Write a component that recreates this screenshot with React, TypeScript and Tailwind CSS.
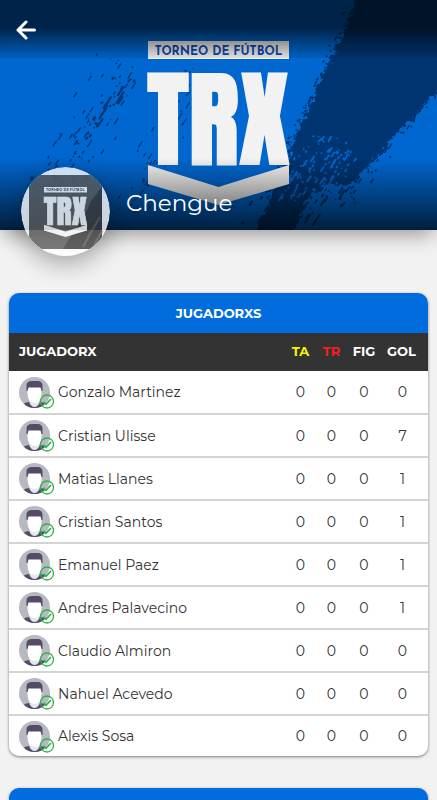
const players = [
  { name: "Gonzalo Martinez", ta: 0, tr: 0, fig: 0, gol: 0 },
  { name: "Cristian Ulisse", ta: 0, tr: 0, fig: 0, gol: 7 },
  { name: "Matias Llanes", ta: 0, tr: 0, fig: 0, gol: 1 },
  { name: "Cristian Santos", ta: 0, tr: 0, fig: 0, gol: 1 },
  { name: "Emanuel Paez", ta: 0, tr: 0, fig: 0, gol: 1 },
  { name: "Andres Palavecino", ta: 0, tr: 0, fig: 0, gol: 1 },
  { name: "Claudio Almiron", ta: 0, tr: 0, fig: 0, gol: 0 },
  { name: "Nahuel Acevedo", ta: 0, tr: 0, fig: 0, gol: 0 },
  { name: "Alexis Sosa", ta: 0, tr: 0, fig: 0, gol: 0 },
];

// Small seeded generator so the brush texture is the same on every render
function seeded(seed: number) {
  let s = seed;
  return () => {
    s = (s * 16807) % 2147483647;
    return s / 2147483647;
  };
}

// Dry brush marks scattered round the line x1,y1 -> x2,y2
function marks(seed: number, count: number, x1: number, y1: number, x2: number, y2: number, spread: number, maxLen: number) {
  const rnd = seeded(seed);
  let d = "";
  for (let i = 0; i < count; i++) {
    const t = rnd();
    const off = (rnd() + rnd() - 1) * spread;
    const x = x1 + (x2 - x1) * t + off;
    const y = y1 + (y2 - y1) * t + off * 0.3;
    const len = 1 + rnd() * rnd() * maxLen;
    d += `M${x.toFixed(1)} ${y.toFixed(1)}l${(-len * 0.55).toFixed(1)} ${(len * 0.83).toFixed(1)}`;
  }
  return d;
}

const leftMarks = marks(11, 110, 126, 62, 40, 215, 30, 9);
const leftBold = marks(29, 30, 130, 78, 74, 155, 7, 18);
const middleMarks = marks(47, 60, 200, 70, 130, 215, 22, 8);
const edgeMarks = marks(71, 160, 352, 10, 268, 200, 8, 4);
const rightMarks = marks(83, 110, 322, 175, 262, 228, 36, 16);
const rightEdge = marks(97, 50, 425, 98, 340, 205, 12, 7);
const blueMarks = marks(101, 120, 345, 140, 285, 200, 34, 9);

function Logo({ light, dark }: { light: string; dark: string }) {
  return (
    <g>
      <rect width="141" height="18" fill={light} />
      <text x="70.5" y="14" textAnchor="middle" fontSize="12" fontWeight="700" fontFamily="'Josefin Sans', Lato, sans-serif" fill={dark}>
        TORNEO DE FÚTBOL
      </text>
      <text x="70.5" y="123" textAnchor="middle" fontSize="105" fontFamily="Anton, 'Bebas Neue', Oswald, 'Roboto Condensed', sans-serif" fill={light} stroke={light} strokeWidth="2">
        TRX
      </text>
      <path d="M0 124L70.5 146L141 124V143L70.5 164L0 143Z" fill={light} />
    </g>
  );
}

function Banner() {
  return (
    <svg viewBox="0 0 437 230" preserveAspectRatio="xMidYMid slice" className="absolute inset-0 h-full w-full" aria-hidden="true">
      <defs>
        <filter id="rough" x="-5%" y="-5%" width="110%" height="110%">
          <feTurbulence type="fractalNoise" baseFrequency="0.18" numOctaves="3" seed="4" result="n" />
          <feDisplacementMap in="SourceGraphic" in2="n" scale="11" xChannelSelector="R" yChannelSelector="G" />
        </filter>
        <linearGradient id="top" x1="0" y1="0" x2="0" y2="1">
          <stop offset="0" stopColor="#000" stopOpacity="0.65" />
          <stop offset="0.48" stopColor="#000" stopOpacity="0.65" />
          <stop offset="1" stopColor="#000" stopOpacity="0.08" />
        </linearGradient>
        <linearGradient id="bottom" x1="0" y1="0" x2="0" y2="1">
          <stop offset="0" stopColor="#000" stopOpacity="0" />
          <stop offset="1" stopColor="#000" stopOpacity="0.7" />
        </linearGradient>
      </defs>
      <rect width="437" height="230" fill="#0067d0" />
      <path
        filter="url(#rough)"
        fill="#003672"
        d="M360 -10L348 22L333 55L321 78L306 115L291 150L280 180L268 206L254 232H292L302 212L312 192L330 184L352 186L362 172L376 158L394 137L412 120L429 100L449 80V-10Z"
      />
      <g fill="none" stroke="#003672">
        <path d={leftMarks} strokeWidth="1.3" />
        <path d={leftBold} strokeWidth="2" />
        <path d={middleMarks} strokeWidth="1.2" />
        <path d={edgeMarks} strokeWidth="1.8" />
        <path d={rightMarks} strokeWidth="2" />
        <path d={rightEdge} strokeWidth="1.6" />
      </g>
      <path d={blueMarks} stroke="#0067d0" strokeWidth="1.8" fill="none" />
      <g transform="translate(148 41)">
        <Logo light="#f2f2f2" dark="#0c49b0" />
      </g>
      <rect width="437" height="58" fill="url(#top)" />
      <rect y="158" width="437" height="72" fill="url(#bottom)" />
    </svg>
  );
}

function TeamBadge() {
  return (
    <svg viewBox="0 0 89 89" className="size-[89px] shrink-0 rounded-full opacity-80 shadow-[0_8px_24px_rgba(0,0,0,0.4)]" role="img" aria-label="Chengue">
      <defs>
        <clipPath id="round">
          <circle cx="44.5" cy="44.5" r="44.5" />
        </clipPath>
      </defs>
      <g clipPath="url(#round)">
        <rect width="89" height="89" fill="#fff" />
        <rect x="8" y="8" width="73" height="74" fill="#5c5c5c" />
        <path d="M81 20L70 34L64 48L52 66L42 82H81Z" fill="#3c3c3c" />
        <path d="M79 50l-12 20M74 58l-12 22M81 64l-9 16" stroke="#5c5c5c" strokeWidth="2" />
        <g transform="translate(23 20) scale(0.305)">
          <Logo light="#fff" dark="#444" />
        </g>
      </g>
    </svg>
  );
}

function PlayerAvatar() {
  return (
    <svg viewBox="0 0 36 33" className="h-[33px] w-9 shrink-0" aria-hidden="true">
      <defs>
        <clipPath id="face">
          <circle cx="15.5" cy="16.5" r="15.5" />
        </clipPath>
      </defs>
      <g clipPath="url(#face)">
        <rect width="32" height="33" fill="#b7b9c1" />
        <path d="M4 28Q7 26 11 26H20Q24 26 27 28V33H4Z" fill="#554b66" />
        <path d="M10.5 22H20.5V27Q18.5 31 15.5 31Q12.5 31 10.5 27Z" fill="#e3e7ee" />
        <path d="M8.5 11H22.5V18Q22 26.5 15.5 27Q9 26.5 8.5 18Z" fill="#fff" />
        <path d="M7.5 15V9.5Q7.5 5 13 5H20Q23.5 6 23.5 9.5V15H22.5L21.5 11.5H9.5L8.5 15Z" fill="#554b66" />
      </g>
      <circle cx="28" cy="25.5" r="6.5" fill="none" stroke="#32b14a" strokeWidth="1.3" />
      <path d="M24.5 26L27 28.3L32 23" fill="none" stroke="#32b14a" strokeWidth="1.8" />
    </svg>
  );
}

function PlayersTable() {
  return (
    <table className="w-full table-fixed border-collapse">
      <colgroup>
        <col />
        <col className="w-[31px]" />
        <col className="w-[31px]" />
        <col className="w-[34px]" />
        <col className="w-[47px]" />
      </colgroup>
      <thead>
        <tr className="h-[38px] bg-[#333] text-[13px] font-bold text-white">
          <th scope="col" className="pl-[10px] text-left">JUGADORX</th>
          <th scope="col" className="text-[#f5f500]">TA</th>
          <th scope="col" className="text-[#f02020]">TR</th>
          <th scope="col">FIG</th>
          <th scope="col" className="pr-1.5">GOL</th>
        </tr>
      </thead>
      <tbody>
        {players.map((p) => (
          <tr key={p.name} className="h-[43px] border-b-2 border-[#d4d4d4] text-center text-sm text-[#333] last:h-[41px] last:border-b-0">
            <td className="pl-[10px] text-left">
              <div className="flex items-center gap-[3px]">
                <PlayerAvatar />
                <span>{p.name}</span>
              </div>
            </td>
            <td>{p.ta}</td>
            <td>{p.tr}</td>
            <td>{p.fig}</td>
            <td className="pr-1">{p.gol}</td>
          </tr>
        ))}
      </tbody>
    </table>
  );
}

export default function App() {
  return (
    <div className="min-h-screen bg-[#f2f2f2] font-[Montserrat,Inter,sans-serif]">
      <header className="relative flex h-[230px] flex-col justify-between shadow-[0_8px_20px_-4px_rgba(0,0,0,0.4)]">
        <Banner />
        <button type="button" aria-label="Volver" className="relative mt-4 ml-3 flex size-7 items-center justify-center text-white">
          <svg viewBox="0 0 20 20" className="size-5" fill="none" stroke="currentColor" strokeWidth="3" strokeLinecap="round" strokeLinejoin="round">
            <path d="M18.5 10H2M10 2L2 10L10 18" />
          </svg>
        </button>
        <div className="relative -mb-[26px] ml-[21px] flex items-center gap-4">
          <TeamBadge />
          <h1 className="mb-4 text-[23px] text-white">Chengue</h1>
        </div>
      </header>

      <main className="mt-[63px] flex flex-col gap-8 px-[9px]">
        <section className="overflow-hidden rounded-[10px] bg-white shadow-[0_1px_3px_rgba(0,0,0,0.5)]">
          <h2 className="bg-[#006cdd] text-center text-[13px] leading-10 font-bold text-white">JUGADORXS</h2>
          <PlayersTable />
        </section>
        <section className="h-3 rounded-t-[10px] bg-[#006cdd] shadow-[0_1px_3px_rgba(0,0,0,0.5)]" />
      </main>
    </div>
  );
}
